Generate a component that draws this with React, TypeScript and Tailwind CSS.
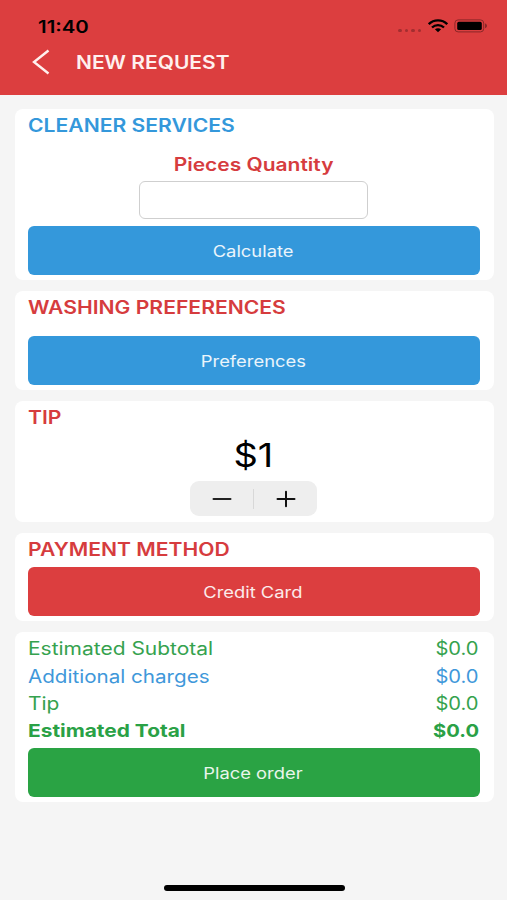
import type { ReactNode } from 'react';

const charges = [
    { label: "Estimated Subtotal", amount: "$0.0", style: "h-7 text-[#35a24e]", stretch: "scale-x-[1.165]" },
    { label: "Additional charges", amount: "$0.0", style: "h-7 text-[#3f98da]", stretch: "scale-x-[1.145]" },
    { label: "Tip", amount: "$0.0", style: "h-[26px] text-[#35a24e]", stretch: "scale-x-[1.165]" },
    { label: "Estimated Total", amount: "$0.0", style: "h-[29px] font-bold text-[#2aa146]", stretch: "scale-x-[1.16]" },
];

function Card({ className, children }: { className: string; children: ReactNode }) {
    return (
        <section className={`flex flex-col rounded-lg bg-white pl-[13px] pr-[14px] ${className}`}>
            {children}
        </section>
    );
}

function Title({ className, children }: { className: string; children: ReactNode }) {
    return (
        <h2 className={`flex shrink-0 items-center text-[18px] font-semibold ${className}`}>
            <span className="origin-left scale-x-[1.173] whitespace-nowrap">{children}</span>
        </h2>
    );
}

function Button({ className, children }: { className: string; children: ReactNode }) {
    return (
        <button className={`flex h-[49px] shrink-0 items-center justify-center rounded-md pt-[2px] pr-[2px] text-[15.5px] text-white/90 ${className}`}>
            <span className="scale-x-[1.185] whitespace-nowrap">{children}</span>
        </button>
    );
}

function StatusBar() {
    return (
        <div className="flex h-[44px] items-start justify-between pl-[38px] pr-[19px] pt-[16px] text-black">
            <span className="origin-left scale-x-[1.2] text-[17px] font-semibold leading-[22px]">11:40</span>
            <div className="flex items-center pt-[3px]">
                <div className="mr-[7px] mt-[9px] flex gap-[3px]">
                    <i className="size-[3.5px] rounded-full bg-[#a32e30]" />
                    <i className="size-[3.5px] rounded-full bg-[#a32e30]" />
                    <i className="size-[3.5px] rounded-full bg-[#a32e30]" />
                    <i className="size-[3.5px] rounded-full bg-[#a32e30]" />
                </div>
                <svg width="20" height="14" viewBox="0 0 20 14" fill="none" stroke="#000" strokeWidth="2.3">
                    <path d="M.8 5.2C5.8.2 14.2.2 19.2 5.2" />
                    <path d="M4 8.5c3.4-3.3 8.6-3.3 12 0" />
                    <path d="M6.9 10.3c1.8-1.5 4.4-1.5 6.2 0L10 13.2z" fill="#000" stroke="none" />
                </svg>
                <svg className="ml-[6px]" width="34" height="14" viewBox="0 0 34 14">
                    <rect x=".9" y=".9" width="28.8" height="12" rx="3.2" fill="none" stroke="#8b2728" strokeWidth="1" />
                    <rect x="3.2" y="2.8" width="24.6" height="8.2" rx="1.6" fill="#000" />
                    <path d="M31 4.6c2.7.7 2.7 4 0 4.7z" fill="#8b2728" />
                </svg>
            </div>
        </div>
    );
}

export default function App() {
    return (
        <div className="flex h-[900px] w-[507px] flex-col overflow-hidden bg-[#f5f5f5] font-['Inter',sans-serif]">
            <header className="h-[95px] shrink-0 bg-[#dc3e3f]">
                <StatusBar />
                <div className="flex h-[36px] items-center pl-[32px] text-[#fff0ee]">
                    <svg width="18" height="26" viewBox="0 0 18 26" fill="none" stroke="currentColor" strokeWidth="2.4">
                        <path d="M16.5 1.5 2 13l14.5 11.5" />
                    </svg>
                    <h1 className="ml-[26px] origin-left scale-x-[1.165] text-[18px] font-semibold">NEW REQUEST</h1>
                </div>
            </header>

            <main className="flex flex-col gap-[11px] pl-[15px] pr-[13px] pt-[14px]">
                <Card className="h-[171px]">
                    <Title className="h-8 text-[#3498db]">CLEANER SERVICES</Title>
                    <label className="flex h-[40px] items-center justify-center pt-[6px] text-[18px] font-semibold text-[#d63c3e]">
                        <span className="scale-x-[1.165]">Pieces Quantity</span>
                    </label>
                    <input className="mb-[7px] mr-[1px] h-[38px] w-[229px] shrink-0 self-center rounded-md border border-[#cfcfcf] bg-white outline-none" />
                    <Button className="bg-[#3498db]">Calculate</Button>
                </Card>

                <Card className="h-[99px]">
                    <Title className="mb-[13px] h-8 text-[#d63c3e]">WASHING PREFERENCES</Title>
                    <Button className="bg-[#3498db]">Preferences</Button>
                </Card>

                <Card className="h-[121px]">
                    <Title className="h-8 text-[#d63c3e]">TIP</Title>
                    <div className="flex h-[48px] shrink-0 items-center justify-center pb-[2px] pr-[2px] text-[33px] text-black">
                        <span className="scale-x-[1.15]">$1</span>
                    </div>
                    <div className="mr-[1px] flex h-[35px] w-[127px] shrink-0 items-center self-center rounded-[9px] bg-[#eeeeee]">
                        <button className="flex flex-1 justify-center">
                            <svg width="20" height="18" viewBox="0 0 20 18" stroke="#222" strokeWidth="2" strokeLinecap="round">
                                <path d="M1.5 9h17" />
                            </svg>
                        </button>
                        <div className="h-[20px] w-px bg-[#d8d8d8]" />
                        <button className="flex flex-1 justify-center">
                            <svg width="20" height="18" viewBox="0 0 20 18" stroke="#111" strokeWidth="2" strokeLinecap="round">
                                <path d="M1.5 9h17M10 1.8v14.4" />
                            </svg>
                        </button>
                    </div>
                </Card>

                <Card className="h-[88px]">
                    <Title className="mb-[2px] h-8 text-[#d63c3e]">PAYMENT METHOD</Title>
                    <Button className="bg-[#dc3e3f]">Credit Card</Button>
                </Card>

                <Card className="h-[170px] pt-[2px]">
                    <dl className="mb-[3px] pr-[1px]">
                        {charges.map((row) => (
                            <div key={row.label} className={`flex items-center justify-between text-[18px] ${row.style}`}>
                                <dt className={`origin-left ${row.stretch}`}>{row.label}</dt>
                                <dd className="origin-right scale-x-[1.12]">{row.amount}</dd>
                            </div>
                        ))}
                    </dl>
                    <Button className="bg-[#2aa344]">Place order</Button>
                </Card>
            </main>

            <div className="mb-[9px] ml-[1px] mt-auto h-[6px] w-[181px] shrink-0 self-center rounded-full bg-black" />
        </div>
    );
}
